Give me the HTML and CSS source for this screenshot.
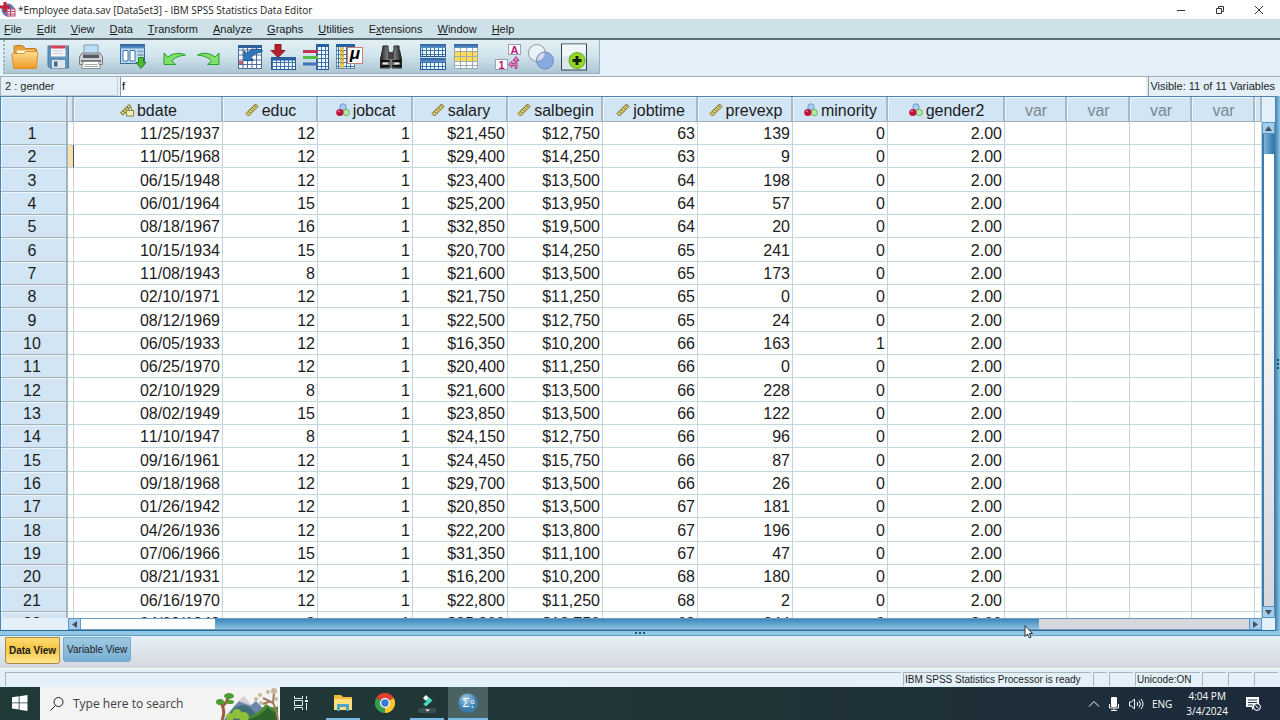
FILE: index.html
```html
<!DOCTYPE html>
<html lang="en">
<head>
    <meta charset="UTF-8">
    <meta name="viewport" content="width=device-width, initial-scale=1.0">
    <title>*Employee data.sav [DataSet3] - IBM SPSS Statistics Data Editor</title>
    <link rel="stylesheet" href="styles.css">
</head>
<body>
    <!-- shared icons -->
    <svg class="defs" aria-hidden="true">
        <symbol id="ico-scale" viewBox="0 0 14 14">
            <path d="M1 10.500L10.500 1L13 3.500L3.500 13Z" fill="#e0cf6c" stroke="#6b6428"/>
            <path d="M3.500 8.500l1.500 1.500M5.500 6.500l1.500 1.500M7.500 4.500l1.500 1.500M9.500 2.500l1.500 1.500" stroke="#5f5923"/>
        </symbol>
        <symbol id="ico-date" viewBox="0 0 14 14">
            <path d="M0.500 10L9 1.500L11 3.500L3 12Z" fill="#e0cf6c" stroke="#6b6428"/>
            <path d="M3 8l1.500 1.500M5 6l1.500 1.500M7 4l1.500 1.500" stroke="#5f5923"/>
            <rect x="6.500" y="7.500" width="7" height="5.500" fill="#f2eeb4" stroke="#8b8645"/>
            <path d="M8.500 7v-2q1.500-2 3 0v2" fill="none" stroke="#8b8645"/>
        </symbol>
        <symbol id="ico-nominal" viewBox="0 0 14 14">
            <circle cx="7" cy="4" r="3.200" fill="#a9cdf0" stroke="#6d9cca"/>
            <circle cx="10.300" cy="9.500" r="3.200" fill="#b5e6a4" stroke="#6fae68"/>
            <circle cx="3.800" cy="9.500" r="3.600" fill="#c2123c"/>
            <circle cx="2.900" cy="8.300" r="1" fill="#ec7f95"/>
        </symbol>
        <linearGradient id="gFolder" x2="0" y2="1"><stop stop-color="#ffdf94"/><stop offset="1" stop-color="#ee9a24"/></linearGradient>
        <linearGradient id="gBlue" x2="0" y2="1"><stop stop-color="#2b5fa0"/><stop offset="1" stop-color="#5d93c9"/></linearGradient>
        <linearGradient id="gDark" x2="1" y2="0"><stop stop-color="#222"/><stop offset=".5" stop-color="#aaa"/><stop offset="1" stop-color="#1c1c1c"/></linearGradient>
        <radialGradient id="gSpss" cx=".4" cy=".3"><stop stop-color="#a9d0e9"/><stop offset="1" stop-color="#3a7cae"/></radialGradient>
        <pattern id="pCells" width="4" height="4" patternUnits="userSpaceOnUse"><rect width="4" height="4" fill="#3c78ae"/><rect width="3" height="3" fill="#f2f8fd"/></pattern>
    </svg>

    <header class="titlebar">
        <svg class="app-icon" viewBox="0 0 16 16">
            <circle cx="8" cy="8" r="6.500" fill="#5b7fae"/>
            <rect x="7" y="7" width="8" height="7" fill="#e9eef8" stroke="#c0436a"/>
            <path d="M7 9.500h8M7 12h8M10.500 7v7" stroke="#c0436a"/>
            <path d="M5 0v10M0 5h10" stroke="#c11f3e" stroke-width="3"/>
        </svg>
        <h1>*Employee data.sav [DataSet3] - IBM SPSS Statistics Data Editor</h1>
        <button aria-label="Minimize"><svg viewBox="0 0 10 10"><path d="M1 5.500h8"/></svg></button>
        <button aria-label="Restore"><svg viewBox="0 0 10 10"><path d="M1.500 3.500h5v5h-5zM3.500 3v-1.500h5v5h-1.500"/></svg></button>
        <button aria-label="Close"><svg viewBox="0 0 10 10"><path d="M1 1l8 8M9 1l-8 8"/></svg></button>
    </header>

    <nav class="menubar">
        <button><u>F</u>ile</button>
        <button><u>E</u>dit</button>
        <button><u>V</u>iew</button>
        <button><u>D</u>ata</button>
        <button><u>T</u>ransform</button>
        <button><u>A</u>nalyze</button>
        <button><u>G</u>raphs</button>
        <button><u>U</u>tilities</button>
        <button>E<u>x</u>tensions</button>
        <button><u>W</u>indow</button>
        <button><u>H</u>elp</button>
    </nav>

    <div class="toolbar-row">
        <div class="toolbar">
            <div class="tool-group">
                <button aria-label="Open"><svg viewBox="0 0 28 28">
                    <path d="M3 4q0-1.500 1.500-1.500h7l3 3h9.500q1.500 0 1.500 1.500v8h-22z" fill="#e8a33c" stroke="#c27c20"/>
                    <path d="M6 7.500h17v5h-17z" fill="#fff6dc"/>
                    <path d="M1 12q0-1.500 1.500-1.500h10l2.500-2h10.500q1.500 0 1.300 1.500l-1.300 14.500q0 1-1.500 1h-20q-1.500 0-1.500-1.500z" fill="url(#gFolder)" stroke="#d98d26"/>
                </svg></button>
                <button aria-label="Save"><svg viewBox="0 0 28 28">
                    <path d="M4 3h20.500v22h-18.500l-2-2z" fill="#6192b8" stroke="#4a7499"/>
                    <rect x="7" y="2.500" width="14.500" height="11" fill="#f5f5f7"/>
                    <path d="M7 4h14.500" stroke="#d5425d" stroke-width="3"/>
                    <path d="M9 8h10M9 10.500h10" stroke="#ccd"/>
                    <rect x="8" y="17" width="13" height="8" fill="#dfe5ea"/>
                    <rect x="10" y="18.500" width="3.500" height="5" fill="#486b89"/>
                </svg></button>
                <button aria-label="Print"><svg viewBox="0 0 28 28">
                    <path d="M7 2h14v10h-14z" fill="#b9def5" stroke="#7f9db3"/>
                    <path d="M5 10h18l2.500 4v7.500h-23v-7.500z" fill="#cfd1d5" stroke="#777c84"/>
                    <path d="M6 11.500h16v3.500h-16z" fill="#555b63"/>
                    <path d="M4 18h20" stroke="#777" stroke-width="2"/>
                    <path d="M6.500 18.500h15l2 7h-19z" fill="#fff" stroke="#8b9097"/>
                    <path d="M7.500 21.500h13M7 23.500h14" stroke="#aaa"/>
                </svg></button>
            </div>
            <div class="tool-group">
                <button aria-label="Recall dialog"><svg viewBox="0 0 28 28">
                    <rect x="1.500" y="1.500" width="24" height="19" fill="#c3dcf0" stroke="#386a9a"/>
                    <rect x="1" y="1" width="25" height="4.500" fill="url(#gBlue)"/>
                    <path d="M4 7.500h5v10.500h-5zM11 7.500h5v10.500h-5z" fill="#fff" stroke="#3672aa"/>
                    <path d="M18.500 8.500h6M18.500 12h6" stroke="#84a9c8" stroke-width="2"/>
                    <path d="M19.500 14.500h5v5h2.500l-5 6l-5-6h2.500z" fill="#50b639" stroke="#28861d"/>
                </svg></button>
            </div>
            <div class="tool-group">
                <button aria-label="Undo"><svg viewBox="0 0 28 28"><path d="M3 10v11.500h11.500l-4-3.500q4-5 14-6q-4-2.500-10-1.500q-5 1-7.500 3.500z" fill="#7fdf6a" stroke="#27a32d"/></svg></button>
                <button aria-label="Redo"><svg viewBox="0 0 28 28"><path d="M25 10v11.500h-11.500l4-3.500q-4-5-14-6q4-2.500 10-1.500q5 1 7.500 3.500z" fill="#7fdf6a" stroke="#27a32d"/></svg></button>
            </div>
            <div class="tool-group">
                <button aria-label="Go to case"><svg viewBox="0 0 28 28">
                    <rect x="2" y="2" width="24" height="24" fill="#fff"/>
                    <path d="M2 18h5v4h-5z" fill="#d75668"/>
                    <path d="M2.500 2v24M7 2v24M11.500 2v24M16 2v24M20.500 2v24M25.500 2v24M2 2.500h24M2 7h24M2 12h24M2 17h24M2 21.500h24M2 25.500h24" stroke="#4d6c9d"/>
                    <path d="M2 2h24v3h-24z" fill="#2e609c"/>
                    <path d="M8 8v9.500h9.500l-3-3q4-5 11.500-5.500v-2q-10-3-15 3.500z" fill="#2f76bc" stroke="#1c568f"/>
                </svg></button>
                <button aria-label="Go to variable"><svg viewBox="0 0 28 28">
                    <rect x="2.500" y="14.500" width="24" height="12" fill="url(#pCells)" stroke="#245a91"/>
                    <rect x="2" y="14" width="25" height="3.500" fill="#2460a0"/>
                    <path d="M6 1.500h6v6h4l-7 7l-7-7h4z" fill="#b5202d" stroke="#8e1420"/>
                </svg></button>
                <button aria-label="Variables"><svg viewBox="0 0 28 28">
                    <rect x="14.500" y="1.500" width="12" height="25" fill="url(#pCells)" stroke="#245a91"/>
                    <rect x="14" y="1" width="13" height="3" fill="#2460a0"/>
                    <path d="M1 8.500h15" stroke="#c93454" stroke-width="3"/>
                    <path d="M1 14.500h15" stroke="#56bd44" stroke-width="3"/>
                    <path d="M1 21h15" stroke="#4170ba" stroke-width="3"/>
                </svg></button>
                <button aria-label="Descriptive statistics"><svg viewBox="0 0 28 28">
                    <rect x="1.500" y="1.500" width="18" height="24" fill="url(#pCells)" stroke="#6388a9"/>
                    <rect x="1" y="1" width="19" height="3" fill="#2460a0"/>
                    <path d="M5 4h4v21h-4z" fill="#dfc65a"/>
                    <path d="M5 8h4M5 12h4M5 16h4M5 20h4" stroke="#a18e40"/>
                    <rect x="12.500" y="4.500" width="15" height="16" fill="#fff" stroke="#c98072"/>
                    <text x="20" y="16" font-size="17" font-weight="bold" font-style="italic" text-anchor="middle">μ</text>
                </svg></button>
            </div>
            <div class="tool-group">
                <button aria-label="Find"><svg viewBox="0 0 28 28">
                    <path d="M6 3h5v4l2 4v14h-9.500v-9l2-9zM17 3h5v4l.5 0l2 9v9h-9.500v-14l2-4z" fill="url(#gDark)" stroke="#222"/>
                    <path d="M11 9h6v7h-6z" fill="#444"/>
                    <path d="M4 18h8.500M15.500 18h8.500M4 23h8.500M15.500 23h8.500" stroke="#111" stroke-width="2"/>
                    <path d="M5.500 20.500h5M17.500 20.500h5" stroke="#e8e8e8" stroke-width="2"/>
                </svg></button>
            </div>
            <div class="tool-group">
                <button aria-label="Split file"><svg viewBox="0 0 28 28">
                    <rect x="1.500" y="1.500" width="25" height="12" fill="url(#pCells)" stroke="#245a91"/>
                    <rect x="1" y="1" width="26" height="4" fill="url(#gBlue)"/>
                    <rect x="1.500" y="15.500" width="25" height="11" fill="url(#pCells)" stroke="#245a91"/>
                    <rect x="1" y="15" width="26" height="4" fill="url(#gBlue)"/>
                </svg></button>
                <button aria-label="Select cases"><svg viewBox="0 0 28 28">
                    <rect x="2" y="2" width="24" height="24" fill="#fff"/>
                    <path d="M2 9h24v9h-24z" fill="#ffdc50"/>
                    <path d="M2.500 2v24M8.500 2v24M14.500 2v24M20.500 2v24M25.500 2v24M2 8.500h24M2 13.500h24M2 18.500h24M2 22.500h24M2 25.500h24" stroke="#9da9b5"/>
                    <rect x="2" y="1" width="24" height="4" fill="url(#gBlue)"/>
                </svg></button>
            </div>
            <div class="tool-group">
                <button aria-label="Value labels"><svg viewBox="0 0 28 28">
                    <rect x="14.500" y="1.500" width="12" height="10" fill="#fff" stroke="#9c9fb5"/>
                    <text x="20.500" y="10.500" font-size="11" font-weight="bold" text-anchor="middle" fill="#c01880">A</text>
                    <rect x="1.500" y="16.500" width="12" height="10" fill="#fff" stroke="#9c9fb5"/>
                    <text x="7.500" y="25.500" font-size="11" font-weight="bold" text-anchor="middle" fill="#c01880">1</text>
                    <path d="M22 13.500l3 4h-2v8h-2v-3h-3v2l-3.500-3l3.500-3v2h3v-3h-2z" fill="#e679bb" stroke="#ad3f85"/>
                </svg></button>
                <button aria-label="Use variable sets"><svg viewBox="0 0 28 28">
                    <circle cx="10" cy="10" r="8.500" fill="#f5f8fb" fill-opacity=".6" stroke="#8c98a5"/>
                    <circle cx="18" cy="17.500" r="8.500" fill="#799fdd" fill-opacity=".8" stroke="#6e8ac0"/>
                    <path d="M9.700 18.500a8.500 8.500 0 0 1 8.600-9.500a8.500 8.500 0 0 1-8.600 9.500" fill="#cfdcf2" stroke="#8595b8"/>
                </svg></button>
                <button aria-label="Show all variables"><svg viewBox="0 0 28 28">
                    <rect x="1.500" y="1" width="25" height="26" fill="#d7e7ec" stroke="#31424c"/>
                    <path d="M2 1.500h24v8q-14 1-24 5z" fill="#f1f7f9"/>
                    <circle cx="17" cy="17.500" r="8" fill="#93d626" stroke="#6eaa1b"/>
                    <path d="M17 13v9M12.500 17.500h9" stroke="#14260a" stroke-width="3"/>
                </svg></button>
            </div>
        </div>
    </div>

    <div class="cell-bar">
        <label for="cellEditor">2 : gender</label>
        <input type="text" id="cellEditor" value="f">
        <span class="visible-info">Visible: 11 of 11 Variables</span>
    </div>

    <main class="editor">
        <div class="sheet">
            <div class="viewport">
                <table>
                    <colgroup>
                        <col class="c-row"><col class="c-frozen"><col class="c-date">
                        <col class="c-num" span="7"><col class="c-wide">
                        <col class="c-var"><col class="c-var-alt"><col class="c-var"><col class="c-var-alt"><col>
                    </colgroup>
                    <thead><tr id="head"></tr></thead>
                    <tbody id="rows"></tbody>
                </table>
            </div>
            <div class="vscroll">
                <button aria-label="Scroll up"><svg viewBox="0 0 7 5"><path d="M0 5l3.500-5l3.500 5z"/></svg></button>
                <div class="vtrack"><div class="vthumb"></div></div>
                <button aria-label="Scroll down"><svg viewBox="0 0 7 5"><path d="M0 0l3.500 5l3.500-5z"/></svg></button>
            </div>
            <div class="hscroll">
                <button aria-label="Scroll left"><svg viewBox="0 0 5 7"><path d="M5 0l-5 3.500l5 3.500z"/></svg></button>
                <div class="htrack"><div class="hbefore"></div><div class="hthumb"></div><div class="hafter"></div></div>
                <button aria-label="Scroll right"><svg viewBox="0 0 5 7"><path d="M0 0l5 3.500l-5 3.500z"/></svg></button>
            </div>
        </div>
        <div class="split-v"><i></i><i></i><i></i></div>
        <div class="split-h"><i></i><i></i><i></i></div>
    </main>

    <div class="tabs">
        <button class="tab active">Data View</button>
        <button class="tab">Variable View</button>
    </div>

    <footer class="statusbar">
        <span class="st-main"></span>
        <span class="st-text">IBM SPSS Statistics Processor is ready</span>
        <span class="st-tiny"></span>
        <span class="st-small"></span>
        <span class="st-unicode">Unicode:ON</span>
        <span class="st-small"></span>
        <span class="st-small"></span>
        <span class="st-small"></span>
    </footer>

    <div class="taskbar">
        <button class="start" aria-label="Start"><svg width="16" height="16" viewBox="0 0 16 16"><path d="M0 2.300L6.700 1.300V7.500H0zM7.500 1.200L15.500 0V7.500H7.500zM0 8.300H6.700V14.600L0 13.600zM7.500 8.300H15.500V16L7.500 14.800z" fill="#fff"/></svg></button>
        <div class="search">
            <svg width="16" height="16" viewBox="0 0 16 16" fill="none" stroke="#222"><circle cx="9.500" cy="6" r="4.500"/><path d="M6.500 9.500L1.500 14.500"/></svg>
            <input type="text" aria-label="Search" placeholder="Type here to search">
            <svg class="art" viewBox="0 0 64 32">
                <path d="M8 32q10-16 20-23l7 8l5-4l18 19z" fill="#6d86ad"/>
                <path d="M22 13l6-5l8 10l-6-2z" fill="#d9cdd4"/>
                <path d="M10 32q6-14 18-15q10 2 14 15z" fill="#416f78"/>
                <path d="M26 32q14-4 24-16q8 6 12 2v14z" fill="#4c8b34"/>
                <path d="M30 32q14-3 22-13q3 5 9 5v8z" fill="#2c6529"/>
                <path d="M6 32q4-9-1-17M6 18q4-2 6-8" fill="none" stroke="#9a5b3e" stroke-width="3"/>
                <path d="M62 32q-2-12-5-17l-10-5M57 15l1-10M55 13l-8 3" fill="none" stroke="#a7775b" stroke-width="2"/>
                <g fill="#4e9c31"><ellipse cx="4" cy="14" rx="4" ry="3"/><ellipse cx="13" cy="8" rx="5" ry="3"/><ellipse cx="14" cy="14" rx="4" ry="2"/></g>
                <g fill="#c3b99a"><circle cx="44" cy="7" r="2"/><circle cx="52" cy="4" r="2"/><circle cx="58" cy="3" r="3"/><circle cx="45" cy="15" r="2"/><circle cx="60" cy="11" r="2"/><circle cx="40" cy="11" r="2"/></g>
                <g fill="#8dbf3a"><circle cx="14" cy="29" r="4"/><circle cx="21" cy="26" r="5"/><circle cx="28" cy="29" r="5"/></g>
            </svg>
        </div>
        <button aria-label="Task view"><svg width="16" height="16" viewBox="0 0 16 16" fill="none" stroke="#e6ecec"><path d="M1.500 1v2.500h8v-2.500M1.500 15v-2.500h8v2.500M1.500 5.500h8v5h-8zM13.500 1v3M13.500 8v7"/><path d="M12 6h3" stroke-width="2"/></svg></button>
        <button class="running" aria-label="File Explorer"><svg width="20" height="18" viewBox="0 0 20 18"><path d="M1 1h7l2 2h9v13h-18z" fill="#f3b93f"/><path d="M1 5h18v11h-18z" fill="#ffe07c"/><path d="M4 17v-7h12v7h-3v-4h-6v4z" fill="#4fa3c9"/></svg></button>
        <button aria-label="Chrome"><svg width="20" height="20" viewBox="0 0 20 20">
            <path d="M10 10L1.300 5A10 10 0 0 1 18.700 5z" fill="#df4132"/>
            <path d="M10 10L18.700 5A10 10 0 0 1 10 20z" fill="#fbc72c"/>
            <path d="M10 10V20A10 10 0 0 1 1.300 5z" fill="#35a14f"/>
            <circle cx="10" cy="10" r="5" fill="#fff"/><circle cx="10" cy="10" r="3.700" fill="#3778d6"/>
        </svg></button>
        <button class="running" aria-label="Filmora"><svg width="20" height="20" viewBox="0 0 20 20">
            <rect x="1" y="15" width="18" height="5" rx="2" fill="#3b4e51"/>
            <path d="M6 5l3-3l3 3l-3 3z" fill="#fff"/><path d="M9.500 6.500l3-2l3 3l-6.500 6l-3-2.500l3.500-2.500z" fill="#45d8bd"/>
            <path d="M8 16.500h5l-2.500 2z" fill="#fff"/>
        </svg></button>
        <button class="running current" aria-label="SPSS Statistics"><svg width="20" height="20" viewBox="0 0 20 20">
            <circle cx="10" cy="10" r="9.800" fill="url(#gSpss)"/>
            <text x="8" y="14" font-size="12" text-anchor="middle" fill="#fff">Σ</text>
            <text x="14.500" y="11" font-size="7" text-anchor="middle" fill="#fff">α</text>
            <path d="M14.500 12.500l-1.500 2h3z" fill="#d8ebf6"/>
        </svg></button>
        <div class="tray">
            <svg width="12" height="12" viewBox="0 0 12 12" fill="none" stroke="#fff"><path d="M1 8.500l5-5l5 5"/></svg>
            <svg width="12" height="14" viewBox="0 0 12 14"><rect x="3" y="0" width="6" height="10" rx="1" fill="#fff"/><path d="M1.500 7v4h9v-4M6 11v2M3 13.500h6" fill="none" stroke="#fff"/></svg>
            <svg width="16" height="14" viewBox="0 0 16 14" fill="none" stroke="#fff"><path d="M1.500 5h2l3-3v10l-3-3h-2zM9 5q1.500 2 0 4M11 3.500q3 3.500 0 7M13 2q4 5 0 10"/></svg>
            <span class="lang">ENG</span>
            <time>4:04 PM<br>3/4/2024</time>
            <svg class="note" width="16" height="16" viewBox="0 0 16 16"><path d="M1 1h13v10h-4l-3 3v-3h-6z" fill="#fff"/><path d="M3 4h9M3 6.500h9M3 9h5" stroke="#223a48"/><circle cx="12" cy="11" r="3.500" fill="#223a48" stroke="#fff"/><path d="M10.500 9.500l3 3" stroke="#fff"/></svg>
        </div>
    </div>

    <svg class="cursor" viewBox="0 0 10 14"><path d="M1 .500v11l2.500-2.500l1.800 4l1.700-.800l-1.800-3.700h3.300z" fill="#fff" stroke="#333"/></svg>

    <script>
        const columns = [
            ['bdate', 'date'], ['educ', 'scale'], ['jobcat', 'nominal'],
            ['salary', 'scale'], ['salbegin', 'scale'], ['jobtime', 'scale'],
            ['prevexp', 'scale'], ['minority', 'nominal'], ['gender2', 'nominal']
        ];

        // bdate, educ, jobcat, salary, salbegin, jobtime, prevexp, minority, gender2
        const cases = [
            ['11/25/1937', 12, 1, '$21,450', '$12,750', 63, 139, 0, '2.00'],
            ['11/05/1968', 12, 1, '$29,400', '$14,250', 63, 9, 0, '2.00'],
            ['06/15/1948', 12, 1, '$23,400', '$13,500', 64, 198, 0, '2.00'],
            ['06/01/1964', 15, 1, '$25,200', '$13,950', 64, 57, 0, '2.00'],
            ['08/18/1967', 16, 1, '$32,850', '$19,500', 64, 20, 0, '2.00'],
            ['10/15/1934', 15, 1, '$20,700', '$14,250', 65, 241, 0, '2.00'],
            ['11/08/1943', 8, 1, '$21,600', '$13,500', 65, 173, 0, '2.00'],
            ['02/10/1971', 12, 1, '$21,750', '$11,250', 65, 0, 0, '2.00'],
            ['08/12/1969', 12, 1, '$22,500', '$12,750', 65, 24, 0, '2.00'],
            ['06/05/1933', 12, 1, '$16,350', '$10,200', 66, 163, 1, '2.00'],
            ['06/25/1970', 12, 1, '$20,400', '$11,250', 66, 0, 0, '2.00'],
            ['02/10/1929', 8, 1, '$21,600', '$13,500', 66, 228, 0, '2.00'],
            ['08/02/1949', 15, 1, '$23,850', '$13,500', 66, 122, 0, '2.00'],
            ['11/10/1947', 8, 1, '$24,150', '$12,750', 66, 96, 0, '2.00'],
            ['09/16/1961', 12, 1, '$24,450', '$15,750', 66, 87, 0, '2.00'],
            ['09/18/1968', 12, 1, '$29,700', '$13,500', 66, 26, 0, '2.00'],
            ['01/26/1942', 12, 1, '$20,850', '$13,500', 67, 181, 0, '2.00'],
            ['04/26/1936', 12, 1, '$22,200', '$13,800', 67, 196, 0, '2.00'],
            ['07/06/1966', 15, 1, '$31,350', '$11,100', 67, 47, 0, '2.00'],
            ['08/21/1931', 12, 1, '$16,200', '$10,200', 68, 180, 0, '2.00'],
            ['06/16/1970', 12, 1, '$22,800', '$11,250', 68, 2, 0, '2.00'],
            ['04/09/1949', 8, 1, '$25,200', '$12,750', 68, 244, 0, '2.00']
        ];

        const icon = type => `<svg class="measure"><use href="#ico-${type}"/></svg>`;

        document.getElementById('head').innerHTML =
            '<th></th><th></th>' +
            columns.map(([name, type]) => `<th>${icon(type)}${name}</th>`).join('') +
            '<th class="unused">var</th>'.repeat(4) + '<th></th>';

        document.getElementById('rows').innerHTML = cases.map((values, i) =>
            `<tr><th>${i + 1}</th><td class="${i === 1 ? 'selected' : ''}"></td>` +
            values.map(v => `<td>${v}</td>`).join('') +
            '<td></td>'.repeat(5) + '</tr>'
        ).join('');
    </script>
</body>
</html>
```
FILE: styles.css
```css
* {
    box-sizing: border-box;
}
body {
    margin: 0;
    height: 100vh;
    display: flex;
    flex-direction: column;
    overflow: hidden;
    background: #e4f0f9;
    color: #1c1c1c;
    font-family: "Liberation Sans", Arial, sans-serif;
    font-size: 11px;
}
button {
    border: 0;
    padding: 0;
    margin: 0;
    background: none;
    color: inherit;
    font: inherit;
    display: flex;
    align-items: center;
    justify-content: center;
}
.defs {
    position: absolute;
    width: 0;
    height: 0;
}

/* title and menus */
.titlebar {
    height: 19px;
    flex: none;
    display: flex;
    align-items: center;
    background: #fff;
    padding-right: 2px;
}
.titlebar h1 {
    flex: 1;
    margin: 0;
    font: 10px "Open Sans", "Noto Sans", sans-serif;
}
.titlebar button {
    width: 39px;
    height: 19px;
}
.titlebar button svg {
    width: 10px;
    height: 10px;
    fill: none;
    stroke: #333;
}
.app-icon {
    width: 16px;
    height: 16px;
    margin: 0 2px 0 0;
}
.menubar {
    height: 21px;
    flex: none;
    display: flex;
    gap: 15px;
    padding-left: 4px;
    background: #cee1e8;
    border-bottom: 2px solid #5b6d77;
}
.toolbar-row {
    height: 37px;
    flex: none;
    display: flex;
    align-items: flex-start;
    padding-left: 3px;
    border-bottom: 1px solid #a5afb5;
}
.toolbar {
    height: 34px;
    display: flex;
    gap: 9px;
    padding: 0 9px 0 3px;
    border-left: 2px dotted #9fb4be;
    border-right: 1px solid #9fb2bc;
    border-bottom: 1px solid #9fb2bc;
    background: linear-gradient(#e2eff5, #d3e5ed 45%, #abc6d3);
}
.tool-group {
    display: flex;
}
.tool-group button {
    width: 33px;
}
.tool-group svg {
    width: 28px;
    height: 28px;
}

/* cell editor line */
.cell-bar {
    height: 19px;
    flex: none;
    display: flex;
    padding-right: 4px;
}
.cell-bar label {
    width: 118px;
    padding: 3px 4px;
    border-left: 1px solid #a5afb5;
    border-right: 1px solid #c5d1d9;
    border-bottom: 1px solid #c5d1d9;
}
.cell-bar input {
    flex: 1;
    min-width: 0;
    margin: 0 2px;
    padding: 0 1px 1px;
    border: 0;
    border-left: 1px solid #8f9ba3;
    background: #fff;
    font: inherit;
}
.visible-info {
    padding: 3px 1px;
    border-left: 1px solid #8f9ba3;
    white-space: nowrap;
    font-size: 11px;
}

/* data sheet */
.editor {
    flex: 1;
    min-height: 0;
    display: grid;
    grid-template-columns: 1fr 5px;
    grid-template-rows: 1fr 5px;
}
.sheet {
    min-width: 0;
    min-height: 0;
    display: grid;
    grid-template-columns: 1fr 13px;
    grid-template-rows: 1fr 12px;
    border-top: 1px solid #4b84b3;
    border-left: 1px solid #4b84b3;
    border-bottom: 1px solid #2d6795;
}
.viewport {
    min-width: 0;
    min-height: 0;
    overflow: hidden;
    background: #fff;
}
table {
    width: 100%;
    table-layout: fixed;
    border-collapse: separate;
    border-spacing: 0;
    font-size: 16px;
    font-kerning: none;
    line-height: 20px;
}
.c-row {
    width: 67px;
}
.c-frozen {
    width: 6px;
}
.c-date {
    width: 149px;
}
.c-num {
    width: 95px;
}
.c-wide {
    width: 117px;
}
.c-var {
    width: 62px;
}
.c-var-alt {
    width: 63px;
}
th {
    padding: 0;
    font-weight: normal;
    background: #d1e5f4;
    border: 1px solid #a3b2bf;
    border-width: 0 1px 1px 0;
    box-shadow: inset 1px 1px #eef6fc;
}
thead th {
    height: 25px;
    padding: 3px 0 0 2px;
    border-right: 2px solid #aab8c4;
}
tbody th {
    height: 23px;
    padding: 2px 3px 0 0;
    border-right: 2px solid #a3b2bf;
}
td {
    height: 23px;
    padding: 2px 2px 0 0;
    text-align: right;
    border-right: 1px solid #c2d4dd;
    border-bottom: 1px solid #c2d8e0;
}
tbody tr:nth-child(3n) td {
    height: 24px;
}
td.selected {
    background: #f4e3a6;
    border-right: 1px solid #4d4672;
}
.unused {
    color: #7b8790;
}
.measure {
    width: 14px;
    height: 14px;
    margin-right: 3px;
    vertical-align: -1px;
}

/* scrollbars and splitters */
.vscroll {
    display: flex;
    flex-direction: column;
    padding-top: 25px;
    background: #e4f0f9;
}
.vscroll button,
.hscroll button {
    flex: none;
    width: 13px;
    height: 12px;
    background: #a5cdec;
    border: 1px solid #5a96c4;
}
.vscroll svg {
    width: 7px;
    height: 5px;
    fill: #45525c;
}
.hscroll svg {
    width: 5px;
    height: 7px;
    fill: #45525c;
}
.vtrack {
    flex: 1;
    border-left: 2px solid #417ba8;
    border-right: 1px solid #417ba8;
    background: linear-gradient(#fff 20%, #d5d7dd);
}
.vthumb {
    height: 20px;
    background: linear-gradient(90deg, #7db4dc, #2e78aa);
}
.hscroll {
    margin-left: 67px;
    display: flex;
}
.htrack {
    flex: 1;
    display: flex;
    border-top: 1px solid #6f9cbd;
    border-bottom: 1px solid #6f9cbd;
}
.hbefore {
    width: 134px;
    background: #fff;
}
.hthumb {
    flex: 1;
    background: linear-gradient(#3b88bc, #8cc0e2);
}
.hafter {
    width: 18%;
    background: #d6d8de;
}
.split-v,
.split-h {
    display: flex;
    align-items: center;
    justify-content: center;
    gap: 2px;
}
.split-v {
    flex-direction: column;
    background: linear-gradient(90deg, #3f7ea9, #8cc6e6);
}
.split-h {
    grid-column: 1 / -1;
    border-bottom: 1px solid #5f9cc4;
    background: #91c7e7;
}
.split-v i,
.split-h i {
    width: 2px;
    height: 2px;
    background: #24506f;
}

/* view tabs and status */
.tabs {
    height: 32px;
    flex: none;
    display: flex;
    align-items: flex-start;
    gap: 3px;
    padding: 1px 5px;
    font-size: 10px;
    background: linear-gradient(#e4f1f7, #d5d8df);
}
.tab {
    height: 25px;
    padding: 0 3px;
    border: 1px solid #78aace;
    border-radius: 0 0 3px 3px;
    background: linear-gradient(#a0c9e3, #78aed3);
}
.tab.active {
    height: 27px;
    border: 1px solid #a88b43;
    background: linear-gradient(#ffdc73, #f6c747 40%, #ffe68e);
    font-weight: bold;
}
.statusbar {
    height: 19px;
    flex: none;
    display: flex;
    gap: 2px;
    padding: 3px 2px 0 5px;
    border-top: 1px solid #f7fbfe;
    font-size: 10px;
}
.statusbar span {
    height: 14px;
    border-top: 1px solid #a8b4bc;
    border-left: 1px solid #a8b4bc;
    padding-left: 1px;
    line-height: 13px;
    white-space: nowrap;
}
.statusbar .st-main {
    flex: 1;
}
.st-text {
    width: 188px;
}
.st-tiny {
    width: 14px;
}
.st-small {
    width: 24px;
}
.st-unicode {
    width: 65px;
}

/* desktop taskbar */
.taskbar {
    height: 33px;
    flex: none;
    display: flex;
    background: linear-gradient(90deg, #203a38, #213536 50%, #1c2a3b);
    color: #fff;
    font-family: "Open Sans", "Noto Sans", sans-serif;
    font-size: 10px;
}
.taskbar button {
    width: 34px;
    margin: 0 4px;
    border-bottom: 2px solid transparent;
}
.taskbar .start {
    width: 40px;
    margin: 0;
}
.taskbar .running {
    border-bottom-color: #78b9e5;
}
.taskbar .current {
    width: 40px;
    margin: 0;
    background: #4b6263;
}
.search {
    width: 240px;
    display: flex;
    align-items: center;
    padding-left: 9px;
    background: #f3f3f3;
}
.search input {
    flex: 1;
    min-width: 0;
    padding: 0 8px;
    border: 0;
    background: none;
    font: 12px "Open Sans", "Noto Sans", sans-serif;
}
.search input::placeholder {
    color: #3c3c3c;
}
.art {
    width: 64px;
    height: 32px;
}
.tray {
    margin-left: auto;
    padding-right: 19px;
    display: flex;
    align-items: center;
    gap: 8px;
}
.tray time {
    margin-left: 6px;
    line-height: 15px;
    text-align: center;
}
.tray .note {
    margin-left: 9px;
}
.cursor {
    position: absolute;
    left: 1024px;
    top: 625px;
    width: 10px;
    height: 14px;
}
```
